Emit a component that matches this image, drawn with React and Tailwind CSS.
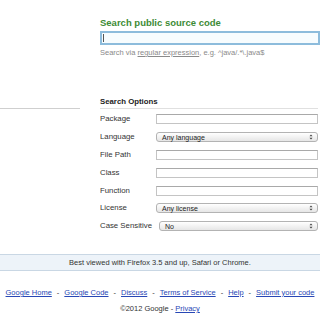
const font = "font-['Liberation_Sans',Arial,Helvetica,sans-serif]";

function TextBox() {
  return <div className="h-[10px] flex-1 border border-[#c4c4c4] border-t-[#a9a9a9] bg-white" />;
}

function SelectBox({ value }) {
  return (
    <div className="h-[10px] flex-1 flex items-center justify-between rounded-[3px] border border-[#b3b3b3] bg-gradient-to-b from-white to-[#e6e6e6] pl-[5px] pr-[4px]">
      <span className="text-[7px] leading-none text-[#222]">{value}</span>
      <svg width="4" height="6" viewBox="0 0 4 6">
        <path d="M2 0.5L3.5 2.2H0.5Z" fill="#444" />
        <path d="M2 5.5L3.5 3.8H0.5Z" fill="#444" />
      </svg>
    </div>
  );
}

const options = [
  { label: 'Package', kind: 'text' },
  { label: 'Language', kind: 'select', value: 'Any language' },
  { label: 'File Path', kind: 'text' },
  { label: 'Class', kind: 'text' },
  { label: 'Function', kind: 'text' },
  { label: 'License', kind: 'select', value: 'Any license' },
  { label: 'Case Sensitive', kind: 'select', value: 'No' },
];

const links = ['Google Home', 'Google Code', 'Discuss', 'Terms of Service', 'Help', 'Submit your code'];

export default function App() {
  return (
    <div className={`w-[320px] h-[320px] overflow-hidden bg-white text-[#333] ${font}`}>
      {/* Search box */}
      <div className="pl-[100px] pt-[17px]">
        <h1 className="text-[9.5px] leading-[11px] font-bold text-[#3d8b35]">Search public source code</h1>
        <div className="mt-[3px] h-[14px] flex items-center border-2 border-[#8dbcdc] bg-[#f7fcfe] pl-[1px]">
          <div className="h-[8px] w-px bg-[#555]" />
        </div>
        <p className="mt-[3px] text-[7.5px] leading-[9px] text-[#8a8a8a]">
          Search via <span className="underline">regular expression</span>, e.g. ^java/.*\.java$
        </p>
      </div>

      {/* Options */}
      <div className="mt-[40px] flex">
        <div className="w-[80px] h-[12px] border-b border-[#cfcfcf]" />
        <div className="ml-[20px] flex-1 pr-[2px]">
          <div className="text-[7.8px] leading-[9px] font-bold text-[#222] pb-[2px] border-b border-[#e0e0e0]">Search Options</div>
          <div className="flex flex-col gap-[8px] pt-[5px]">
            {options.map((o) => (
              <div key={o.label} className={`flex items-center h-[10px] ${o.label === 'License' ? '-mt-px' : ''}`}>
                <span className={`${o.label === 'Case Sensitive' ? 'w-[59px]' : 'w-[56px]'} text-[7.8px] leading-none text-[#333]`}>{o.label}</span>
                {o.kind === 'text' ? <TextBox /> : <SelectBox value={o.value} />}
              </div>
            ))}
          </div>
        </div>
      </div>

      {/* Browser note */}
      <div className="mt-[23px] h-[17px] flex items-center justify-center border-y border-[#c9d7e4] bg-[#edf3f9] text-[7.5px] text-[#333]">
        Best viewed with Firefox 3.5 and up, Safari or Chrome.
      </div>

      {/* Footer */}
      <div className="mt-[17px] flex justify-center text-[7.5px] leading-[9px] text-[#333]">
        {links.map((l, i) => (
          <span key={l} className="flex">
            {i > 0 && <span className="px-[5px]">-</span>}
            <a className="underline text-[#2847b5]">{l}</a>
          </span>
        ))}
      </div>
      <div className="mt-[7px] text-center text-[7.5px] leading-[9px] text-[#333]">
        ©2012 Google - <a className="underline text-[#2847b5]">Privacy</a>
      </div>
    </div>
  );
}
